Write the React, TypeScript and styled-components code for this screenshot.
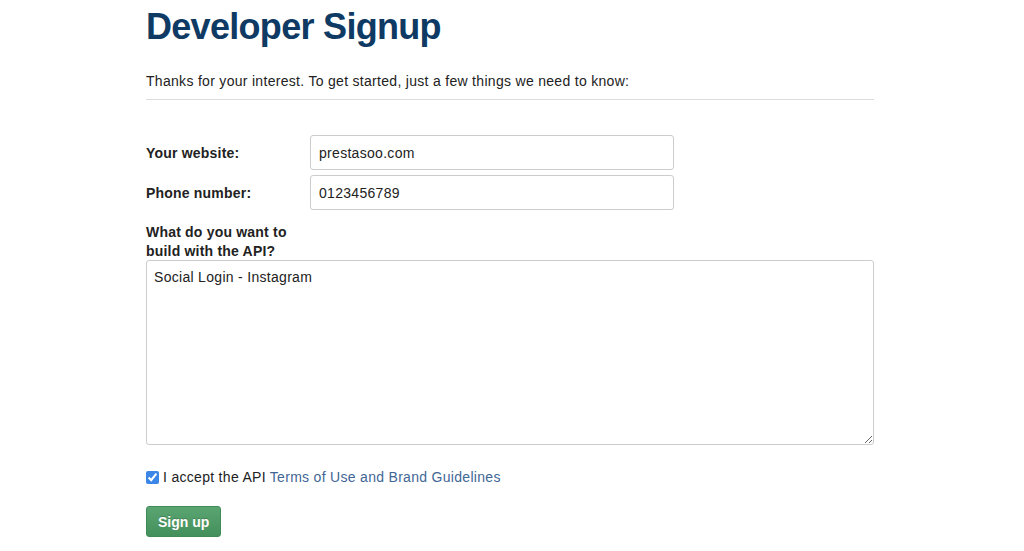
import React, { useState } from "react";
import styled, { createGlobalStyle } from "styled-components";

const GlobalStyle = createGlobalStyle`
  html, body {
    margin: 0;
    padding: 0;
    background: #ffffff;
  }
  body {
    font-family: "Liberation Sans", Arial, sans-serif;
    color: #222222;
  }
`;

const PageStyled = styled.div`
  width: 728px;
  margin: 0 auto 0 146px;
  padding-top: 5px;
`;

const TitleStyled = styled.h1`
  margin: 0;
  font-size: 36px;
  line-height: 44px;
  font-weight: 700;
  color: #0e3a63;
  letter-spacing: -0.7px;
`;

const IntroStyled = styled.p`
  margin: 22px 0 0;
  font-size: 14px;
  line-height: 20px;
  letter-spacing: 0.3px;
  color: #222222;
  padding-bottom: 8px;
  border-bottom: 1px solid #dddddd;
`;

const FormStyled = styled.form`
  display: flex;
  flex-direction: column;
  margin-top: 35px;
`;

const RowStyled = styled.div`
  display: flex;
  align-items: center;
  margin-bottom: 5px;
`;

const LabelStyled = styled.label`
  padding-top: 2px;
  font-size: 14px;
  line-height: 19px;
  font-weight: 700;
  letter-spacing: 0.2px;
  color: #222222;
  width: 164px;
  flex-shrink: 0;
`;

const InputStyled = styled.input`
  width: 364px;
  height: 35px;
  box-sizing: border-box;
  padding: 0 8px;
  border: 1px solid #cccccc;
  border-radius: 3px;
  font-family: inherit;
  font-size: 14px;
  letter-spacing: 0.3px;
  color: #222222;
  outline: none;
`;

const AreaBlockStyled = styled.div`
  display: flex;
  flex-direction: column;
  margin-top: 6px;
`;

const TextAreaStyled = styled.textarea`
  width: 728px;
  height: 185px;
  box-sizing: border-box;
  margin-top: -1px;
  padding: 8px 7px;
  border: 1px solid #cccccc;
  border-radius: 3px;
  font-family: inherit;
  font-size: 14px;
  line-height: 17px;
  letter-spacing: 0.3px;
  color: #222222;
  outline: none;
  resize: both;
`;

const CheckRowStyled = styled.label`
  display: flex;
  align-items: center;
  gap: 4px;
  margin-top: 24px;
  font-size: 14px;
  letter-spacing: 0.3px;
  color: #222222;
`;

const CheckboxStyled = styled.input`
  margin: 0;
  width: 13px;
  height: 13px;
  accent-color: #3b86e6;
`;

const LinkStyled = styled.a`
  color: #3f6796;
  text-decoration: none;
`;

const ButtonStyled = styled.button`
  align-self: flex-start;
  margin-top: 21px;
  height: 31px;
  padding: 0 11px;
  border: 1px solid #3f8a55;
  border-radius: 3px;
  background: linear-gradient(#5aa571, #44905c);
  color: #ffffff;
  font-family: inherit;
  font-size: 14px;
  font-weight: 700;
  text-shadow: 0 -1px 0 rgba(0, 0, 0, 0.2);
  cursor: pointer;
`;

export default function App() {
  const [website, setWebsite] = useState("prestasoo.com");
  const [phone, setPhone] = useState("0123456789");
  const [purpose, setPurpose] = useState("Social Login - Instagram");
  const [accepted, setAccepted] = useState(true);

  return (
    <>
      <GlobalStyle />
      <PageStyled>
        <TitleStyled>Developer Signup</TitleStyled>
        <IntroStyled>
          Thanks for your interest. To get started, just a few things we need to know:
        </IntroStyled>
        <FormStyled onSubmit={(e) => e.preventDefault()}>
          <RowStyled>
            <LabelStyled htmlFor="website">Your website:</LabelStyled>
            <InputStyled id="website" value={website} onChange={(e) => setWebsite(e.target.value)} />
          </RowStyled>
          <RowStyled>
            <LabelStyled htmlFor="phone">Phone number:</LabelStyled>
            <InputStyled id="phone" value={phone} onChange={(e) => setPhone(e.target.value)} />
          </RowStyled>
          <AreaBlockStyled>
            <LabelStyled htmlFor="purpose">
              What do you want to
              <br />
              build with the API?
            </LabelStyled>
            <TextAreaStyled id="purpose" value={purpose} onChange={(e) => setPurpose(e.target.value)} />
          </AreaBlockStyled>
          <CheckRowStyled>
            <CheckboxStyled type="checkbox" checked={accepted} onChange={(e) => setAccepted(e.target.checked)} />
            <span>
              I accept the API <LinkStyled href="#">Terms of Use and Brand Guidelines</LinkStyled>
            </span>
          </CheckRowStyled>
          <ButtonStyled type="submit">Sign up</ButtonStyled>
        </FormStyled>
      </PageStyled>
    </>
  );
}
